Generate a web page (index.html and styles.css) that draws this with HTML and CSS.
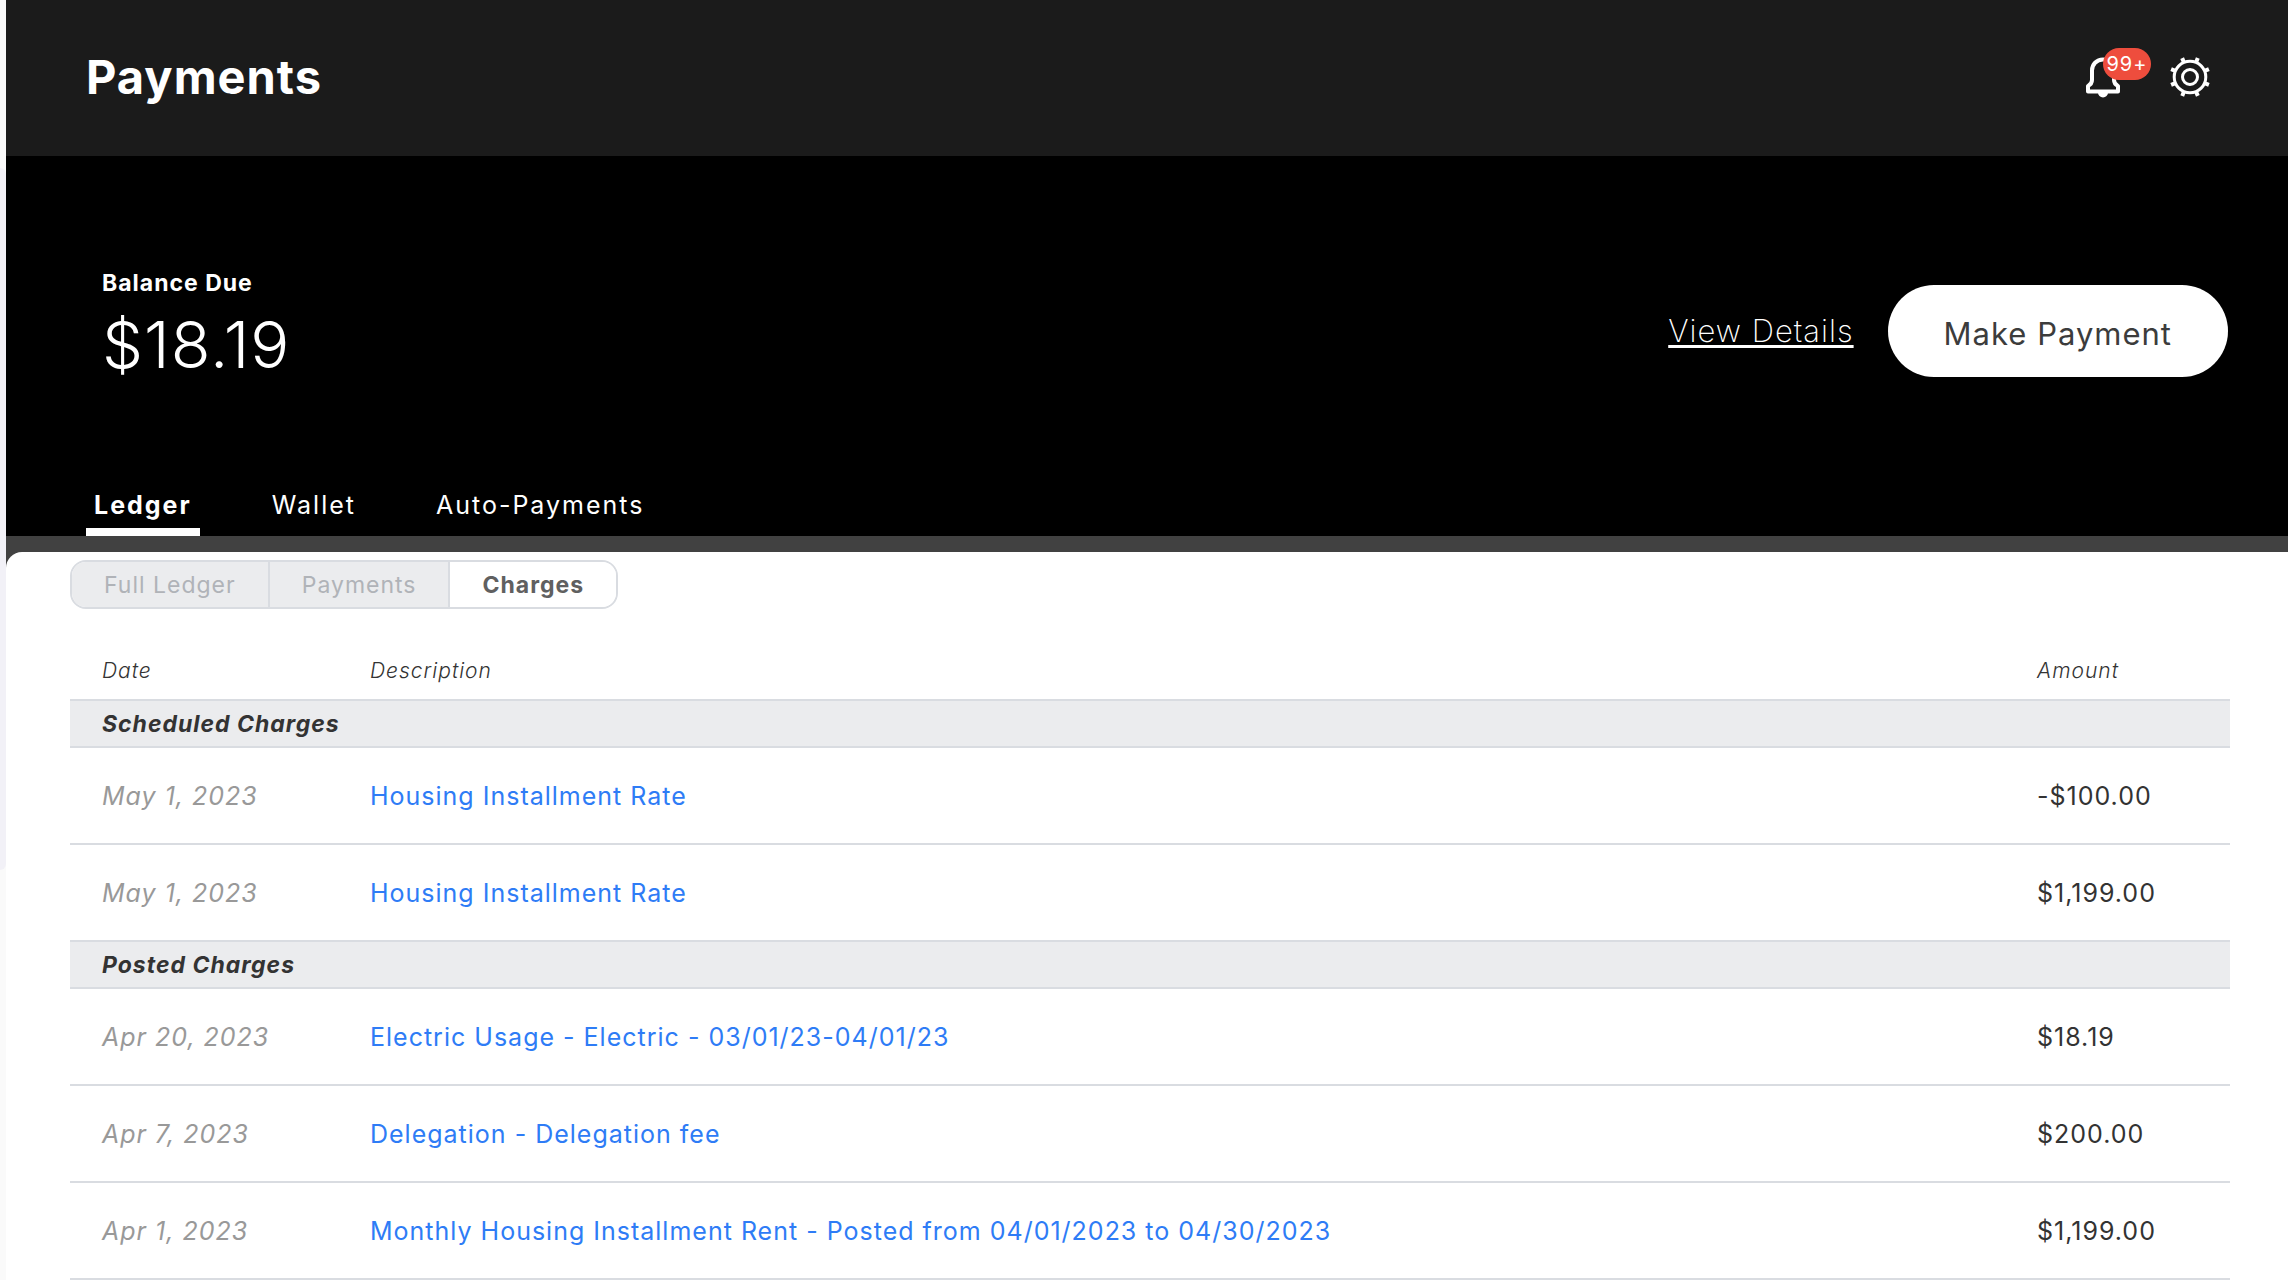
FILE: index.html
```html
<!DOCTYPE html>
<html lang="en">
<head>
<meta charset="utf-8">
<title>Payments</title>
<meta name="viewport" content="width=device-width, initial-scale=1">
<link rel="stylesheet" href="styles.css">
</head>
<body>
<div class="app">
  <div class="rail"><div class="rail-thumb"></div></div>
  <div class="page">
    <header class="topbar">
      <h1 class="title">Payments</h1>
      <div class="actions">
        <button class="icon-button" type="button" aria-label="Notifications">
          <svg width="34" height="42" viewBox="0 0 34 42" fill="none" stroke="#fff" stroke-width="4">
            <path d="M17 3.500C10.500 3.500 6 8.500 6 14.500V24C6 27 5 28.500 2 30V35.500H32V30C29 28.500 28 27 28 24V14.500C28 8.500 23.500 3.500 17 3.500Z" stroke-linejoin="round"/>
            <path d="M12 36.500A5 5 0 0 0 22 36.500Z" fill="#fff" stroke="none"/>
          </svg>
          <span class="badge">99+</span>
        </button>
        <button class="icon-button" type="button" aria-label="Settings">
          <svg width="40" height="42" viewBox="0 -1 40 42" fill="none" stroke="#fff">
            <circle cx="20" cy="20" r="15.800" stroke-width="3"/>
            <circle cx="20" cy="20" r="7.500" stroke-width="3"/>
            <g stroke-width="4">
              <path id="tooth" d="M26.300 4.800L27.800 1.100"/>
              <use href="#tooth" transform="rotate(45 20 20)"/>
              <use href="#tooth" transform="rotate(90 20 20)"/>
              <use href="#tooth" transform="rotate(135 20 20)"/>
              <use href="#tooth" transform="rotate(180 20 20)"/>
              <use href="#tooth" transform="rotate(225 20 20)"/>
              <use href="#tooth" transform="rotate(270 20 20)"/>
              <use href="#tooth" transform="rotate(315 20 20)"/>
            </g>
          </svg>
        </button>
      </div>
    </header>

    <section class="hero">
      <div class="summary">
        <div class="balance">
          <p class="balance-label">Balance Due</p>
          <p class="balance-amount">$18.19</p>
        </div>
        <div class="summary-actions">
          <a class="details-link" href="#details">View Details</a>
          <button class="pay-button" type="button">Make Payment</button>
        </div>
      </div>
      <nav class="tabs" aria-label="Sections">
        <a class="tab tab-active" href="#ledger" aria-current="page">Ledger</a>
        <a class="tab" href="#wallet">Wallet</a>
        <a class="tab" href="#auto">Auto-Payments</a>
      </nav>
    </section>

    <div class="backdrop">
      <main class="panel">
        <div class="segments">
          <button class="segment" type="button">Full Ledger</button>
          <button class="segment" type="button">Payments</button>
          <button class="segment segment-active" type="button" aria-pressed="true">Charges</button>
        </div>
        <table class="ledger">
          <colgroup><col class="col-date"><col><col class="col-amount"></colgroup>
          <thead>
            <tr><th scope="col">Date</th><th scope="col">Description</th><th scope="col">Amount</th></tr>
          </thead>
          <tbody>
            <tr class="group"><th colspan="3" scope="rowgroup">Scheduled Charges</th></tr>
            <tr><td class="date">May 1, 2023</td><td><a href="#c1">Housing Installment Rate</a></td><td class="amount">-$100.00</td></tr>
            <tr><td class="date">May 1, 2023</td><td><a href="#c2">Housing Installment Rate</a></td><td class="amount">$1,199.00</td></tr>
          </tbody>
          <tbody>
            <tr class="group"><th colspan="3" scope="rowgroup">Posted Charges</th></tr>
            <tr><td class="date">Apr 20, 2023</td><td><a href="#c3">Electric Usage - Electric - 03/01/23-04/01/23</a></td><td class="amount">$18.19</td></tr>
            <tr><td class="date">Apr 7, 2023</td><td><a href="#c4">Delegation - Delegation fee</a></td><td class="amount">$200.00</td></tr>
            <tr><td class="date">Apr 1, 2023</td><td><a href="#c5">Monthly Housing Installment Rent - Posted from 04/01/2023 to 04/30/2023</a></td><td class="amount">$1,199.00</td></tr>
          </tbody>
        </table>
      </main>
    </div>
  </div>
</div>
</body>
</html>
```
FILE: styles.css
```css
* { box-sizing: border-box; }

body {
  margin: 0;
  background: #fff;
  color: #333;
  font-family: Inter, "Liberation Sans", sans-serif;
  font-size: 25px;
  letter-spacing: 1px;
}

h1, p { margin: 0; }
button { font: inherit; color: inherit; letter-spacing: inherit; cursor: pointer; }
a { color: inherit; text-decoration: none; }

.app { display: flex; min-height: 100vh; }

.rail { flex: none; width: 6px; padding-top: 168px; background: #fafafa; }
.rail-thumb { height: 702px; background: #f2f1f7; border-radius: 0 6px 6px 0; }

.page { flex: 1; min-width: 0; }

.topbar {
  display: flex;
  align-items: center;
  justify-content: space-between;
  height: 156px;
  padding: 0 78px 2px 80px;
  background: #1b1b1b;
  color: #fff;
}
.title { font-size: 47px; line-height: 56px; font-weight: 700; }
.actions { display: flex; align-items: center; gap: 50px; }
.icon-button { position: relative; display: flex; padding: 0; border: 0; background: none; }
.badge {
  position: absolute;
  left: 17px;
  top: -8px;
  width: 48px;
  height: 32px;
  border-radius: 16px;
  background: #ee4d3d;
  color: #fff;
  font-size: 20px;
  line-height: 32px;
  text-align: center;
}

.hero { background: #000; color: #fff; }
.summary {
  display: flex;
  align-items: center;
  justify-content: space-between;
  padding: 109px 60px 95px 96px;
}
.balance { padding-bottom: 8px; }
.balance-label { font-size: 23px; line-height: 36px; font-weight: 700; }
.balance-amount { font-size: 65px; line-height: 88px; font-weight: 300; }
.summary-actions { display: flex; align-items: center; gap: 34px; }
.details-link {
  font-size: 31px;
  line-height: 40px;
  font-weight: 200;
  text-decoration: underline;
  text-decoration-thickness: 3px;
  text-underline-offset: 3px;
}
.pay-button {
  height: 92px;
  padding: 4px 56px 0;
  border: 0;
  border-radius: 46px;
  background: #fff;
  color: #3c3c3c;
  font-size: 31px;
}

.tabs { display: flex; gap: 64px; padding-left: 80px; }
.tab { height: 44px; padding: 0 8px; line-height: 26px; letter-spacing: 2px; }
.tab-active { border-bottom: 8px solid #fff; font-weight: 700; }

.backdrop { padding-top: 16px; background: linear-gradient(#414141 36px, #fff 36px); }
.panel { padding: 8px 58px 0 64px; border-radius: 16px 0 0 0; background: #fff; }

.segments {
  display: inline-flex;
  height: 49px;
  border: 2px solid #d9dce1;
  border-radius: 16px;
  overflow: hidden;
  font-size: 23px;
  vertical-align: top;
}
.segment { padding: 0 32px; border: 0; background: #ebecee; color: #b0b3b8; }
.segment + .segment { border-left: 2px solid #d9dce1; }
.segment-active { background: #fff; color: #606060; font-weight: 700; }

.ledger { width: 100%; margin-top: 32px; border-collapse: separate; border-spacing: 0; table-layout: fixed; text-align: left; }
.col-date { width: 268px; }
.col-amount { width: 225px; }
.ledger th, .ledger td { padding: 0 0 0 32px; border-bottom: 2px solid #d9dce1; }
.ledger thead th { height: 60px; font-size: 21px; font-weight: 300; font-style: italic; }
.ledger .group th { height: 47px; background: #ebecee; font-size: 23px; font-weight: 700; font-style: italic; }
.ledger td { height: 97px; line-height: 32px; }
.ledger a { color: #2e7cf6; }
.ledger .date { color: #999; font-style: italic; }
```
